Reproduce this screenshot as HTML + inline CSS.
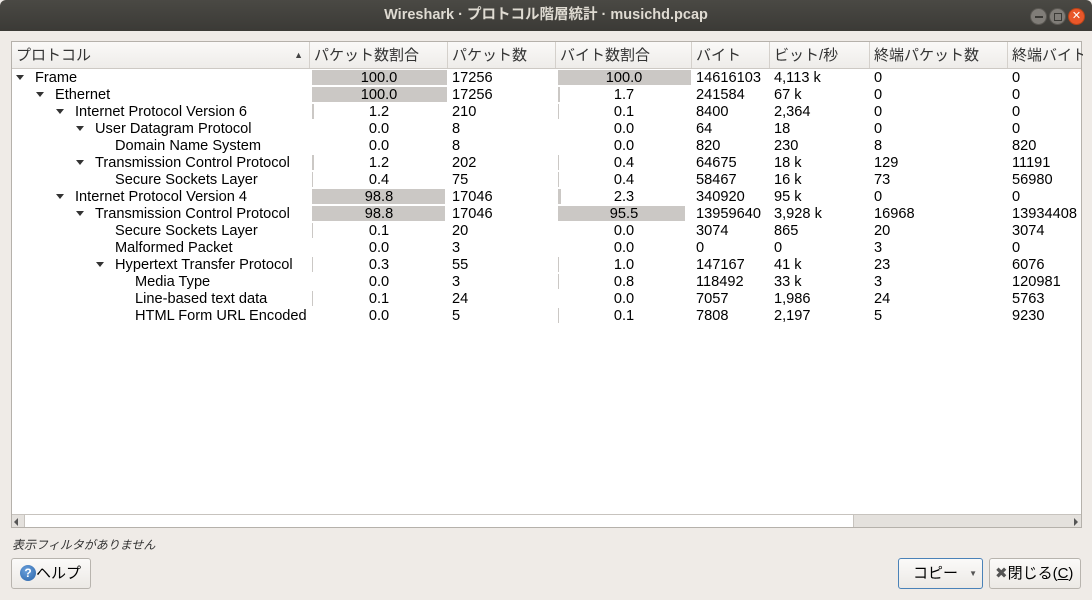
<!DOCTYPE html>
<html><head><meta charset="utf-8"><style>
*{margin:0;padding:0;box-sizing:border-box}
body{width:1092px;height:600px;background:#efebe7;font-family:"Liberation Sans","Noto Sans CJK JP",sans-serif;font-size:14.6px;color:#000;position:relative;overflow:hidden}
.title{position:absolute;left:0;top:0;width:1092px;height:31px;background:linear-gradient(#4a4944,#3b3a36);border-radius:6px 6px 0 0;color:#dfdbd2;font-weight:bold;font-size:14.5px;text-align:center;line-height:31px}
.wb{position:absolute;top:8px;width:17px;height:17px;border-radius:50%;background:#807d78;border:1px solid #5a5853}
.table{position:absolute;left:11px;top:41px;width:1071px;height:487px;background:#fff;border:1px solid #b5b1ab}
.hdr{position:absolute;left:0;top:0;height:27px;width:100%;background:linear-gradient(#faf9f8,#eeece9);border-bottom:1px solid #cdc9c4}
.hc{position:absolute;top:0;height:26px;line-height:27px;padding-left:4px;border-right:1px solid #d4d0cb;font-size:15px;color:#333;white-space:nowrap;overflow:hidden}
.row{position:absolute;left:0;height:17px;width:100%;line-height:18px;white-space:nowrap}
.c{position:absolute;top:0;height:17px}
.n{padding-left:4px}
.p{text-align:center}
.bar{position:absolute;top:1px;height:15px;background:#cbc8c5}
.tri{position:absolute;top:6px;width:0;height:0;border-left:4px solid transparent;border-right:4px solid transparent;border-top:5px solid #333}
.sb{position:absolute;left:0;top:472px;width:1069px;height:13px;background:#e4e1dd;border-top:1px solid #c7c3be}
.btn{position:absolute;top:558px;height:31px;border:1px solid #b8b4ae;border-radius:3px;background:linear-gradient(#fbfaf9,#ece9e5);font-size:15px;line-height:29px;white-space:nowrap}
</style></head><body>
<div class="title">Wireshark · プロトコル階層統計 · musichd.pcap</div>
<div class="wb" style="left:1030px"><div style="position:absolute;left:4px;top:7px;width:8px;height:2px;background:#3b3a36"></div></div>
<div class="wb" style="left:1049px"><div style="position:absolute;left:4px;top:4px;width:8px;height:8px;border:1.5px solid #3b3a36"></div></div>
<div class="wb" style="left:1068px;background:#e9572a;border-color:#b84318;color:#fff;font-size:11px;text-align:center;line-height:15px">✕</div>

<div class="table">
<div class="hdr">
<div class="hc" style="left:0;width:298px">プロトコル<span style="position:absolute;right:6px;top:0;font-size:9px;color:#444">▲</span></div>
<div class="hc" style="left:298px;width:138px">パケット数割合</div>
<div class="hc" style="left:436px;width:108px">パケット数</div>
<div class="hc" style="left:544px;width:136px">バイト数割合</div>
<div class="hc" style="left:680px;width:78px">バイト</div>
<div class="hc" style="left:758px;width:100px">ビット/秒</div>
<div class="hc" style="left:858px;width:138px">終端パケット数</div>
<div class="hc" style="left:996px;width:75px;border-right:0">終端バイト</div>
</div>
<div id="rows"></div>
<div class="sb"><div style="position:absolute;left:2px;top:3px;border-top:4px solid transparent;border-bottom:4px solid transparent;border-right:4px solid #555"></div><div style="position:absolute;left:12px;top:0;width:830px;height:12px;background:#fff;border-right:1px solid #c7c3be;border-left:1px solid #c7c3be"></div><div style="position:absolute;right:3px;top:3px;border-top:4px solid transparent;border-bottom:4px solid transparent;border-left:4px solid #555"></div></div>
</div>
<div style="position:absolute;left:12px;top:536px;font-size:12px;font-style:italic;color:#333">表示フィルタがありません</div>
<div class="btn" style="left:11px;width:80px;padding-left:8px"><span style="display:inline-block;width:16px;height:16px;border-radius:50%;background:radial-gradient(circle at 40% 35%,#6aa0dc,#2a64a8);color:#fff;font-size:12px;font-weight:bold;text-align:center;line-height:16px;vertical-align:middle;position:relative;top:-1px">?</span>ヘルプ</div>
<div class="btn" style="left:898px;width:85px;border-color:#4a82b8;padding-left:14px">コピー<span style="position:absolute;right:5px;top:0;font-size:8px;color:#555">▼</span></div>
<div class="btn" style="left:989px;width:92px;padding-left:5px"><span style="color:#555">✖</span>閉じる(<u>C</u>)</div>
<script>
var d=[
[0,1,"Frame","100.0",100,"17256","100.0",100,"14616103","4,113 k","0","0"],
[1,1,"Ethernet","100.0",100,"17256","1.7",1.7,"241584","67 k","0","0"],
[2,1,"Internet Protocol Version 6","1.2",1.2,"210","0.1",0.1,"8400","2,364","0","0"],
[3,1,"User Datagram Protocol","0.0",0,"8","0.0",0,"64","18","0","0"],
[4,0,"Domain Name System","0.0",0,"8","0.0",0,"820","230","8","820"],
[3,1,"Transmission Control Protocol","1.2",1.2,"202","0.4",0.4,"64675","18 k","129","11191"],
[4,0,"Secure Sockets Layer","0.4",0.4,"75","0.4",0.4,"58467","16 k","73","56980"],
[2,1,"Internet Protocol Version 4","98.8",98.8,"17046","2.3",2.3,"340920","95 k","0","0"],
[3,1,"Transmission Control Protocol","98.8",98.8,"17046","95.5",95.5,"13959640","3,928 k","16968","13934408"],
[4,0,"Secure Sockets Layer","0.1",0.1,"20","0.0",0,"3074","865","20","3074"],
[4,0,"Malformed Packet","0.0",0,"3","0.0",0,"0","0","3","0"],
[4,1,"Hypertext Transfer Protocol","0.3",0.3,"55","1.0",1.0,"147167","41 k","23","6076"],
[5,0,"Media Type","0.0",0,"3","0.8",0.8,"118492","33 k","3","120981"],
[5,0,"Line-based text data","0.1",0.1,"24","0.0",0,"7057","1,986","24","5763"],
[5,0,"HTML Form URL Encoded","0.0",0,"5","0.1",0.1,"7808","2,197","5","9230"]];
var h="";
d.forEach(function(r,i){
var ind=20+r[0]*20;
h+='<div class="row" style="top:'+(27+i*17)+'px">';
if(r[1])h+='<div class="tri" style="left:'+(ind-16)+'px"></div>';
h+='<div class="c" style="left:'+(ind+3)+'px">'+r[2]+'</div>';
var w1=Math.max(r[4]>0?1:0,Math.round(r[4]*1.35));
h+='<div class="bar" style="left:300px;width:'+w1+'px"></div><div class="c p" style="left:298px;width:138px">'+r[3]+'</div>';
h+='<div class="c n" style="left:436px">'+r[5]+'</div>';
var w2=Math.max(r[7]>0?1:0,Math.round(r[7]*1.33));
h+='<div class="bar" style="left:546px;width:'+w2+'px"></div><div class="c p" style="left:544px;width:136px">'+r[6]+'</div>';
h+='<div class="c n" style="left:680px">'+r[8]+'</div><div class="c n" style="left:758px">'+r[9]+'</div><div class="c n" style="left:858px">'+r[10]+'</div><div class="c n" style="left:996px">'+r[11]+'</div></div>';
});
document.getElementById("rows").innerHTML=h;
</script>
</body></html>
